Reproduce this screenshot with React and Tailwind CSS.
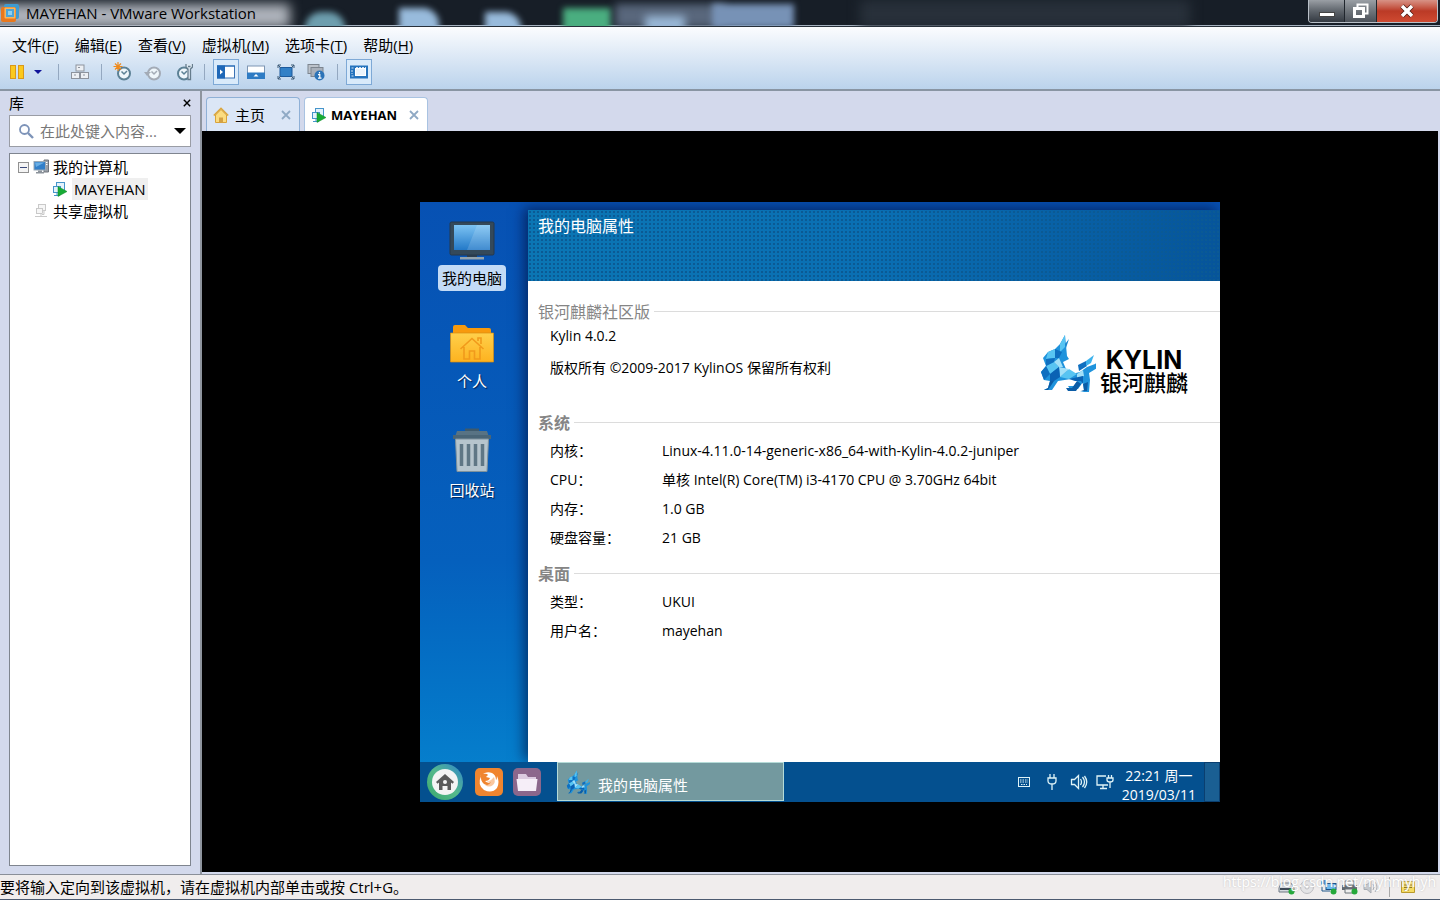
import { Fragment } from 'react'

const WIN_FONT = "font-['Open_Sans','Noto_Sans_CJK_SC',sans-serif]"
const GUEST_FONT = "font-['Open_Sans','Noto_Sans_CJK_SC',sans-serif]"

const MENUS = [
  ['文件', 'F'],
  ['编辑', 'E'],
  ['查看', 'V'],
  ['虚拟机', 'M'],
  ['选项卡', 'T'],
  ['帮助', 'H'],
]

const SECTIONS = [
  {
    title: '系统',
    rows: [
      ['内核：', 'Linux-4.11.0-14-generic-x86_64-with-Kylin-4.0.2-juniper'],
      ['CPU：', '单核 Intel(R) Core(TM) i3-4170 CPU @ 3.70GHz 64bit'],
      ['内存：', '1.0 GB'],
      ['硬盘容量：', '21 GB'],
    ],
  },
  {
    title: '桌面',
    rows: [
      ['类型：', 'UKUI'],
      ['用户名：', 'mayehan'],
    ],
  },
]

/* ---------- icons ---------- */

function VmwareLogo() {
  return (
    <svg className="h-5 w-5 shrink-0" viewBox="0 0 20 20">
      <rect x="4" y="1" width="15" height="15" rx="2" fill="#3f9bd0" />
      <rect x="1" y="4" width="15" height="15" rx="2" fill="#e8781e" />
      <rect x="4.500" y="4.500" width="11" height="11" rx="1" fill="#f7b55c" />
      <rect x="6" y="6" width="8" height="8" fill="#4ba4d8" />
      <rect x="8" y="8" width="4" height="4" fill="#8fd0ef" />
    </svg>
  )
}

function PauseIcon() {
  return (
    <svg className="h-4 w-4" viewBox="0 0 16 16" fill="#fbc91d" stroke="#d9981a">
      <rect x="1.500" y="1.500" width="5" height="13" />
      <rect x="9.500" y="1.500" width="5" height="13" />
    </svg>
  )
}

function BoxesIcon() {
  return (
    <svg className="h-5 w-5" viewBox="0 0 20 20" fill="#eceff3" stroke="#8d939d">
      <rect x="6" y="3" width="8" height="6" />
      <rect x="1.500" y="10.500" width="8" height="6" />
      <rect x="10.500" y="10.500" width="8" height="6" />
      <path d="M8 5.500h2M4 13h2M13 13h2" />
    </svg>
  )
}

function ClockIcon({ kind }) {
  const stroke = kind === 'revert' ? '#a3abb6' : '#5c8195'
  return (
    <svg className="h-5 w-5" viewBox="0 0 20 20" fill="none" stroke={stroke}>
      <circle cx="11" cy="11.500" r="6" fill="#eef6fb" strokeWidth="2" />
      <path d="M8.500 9.500l2.500 2.500 3-3" strokeWidth="1.500" />
      {kind === 'take' && (
        <path d="M5 0v9M.5 4.500h9M2 1.500l6 6M8 1.500l-6 6" stroke="#ef8a1d" strokeWidth="1.200" />
      )}
      {kind === 'revert' && <path d="M1 10l3 4 4-4z" fill={stroke} stroke="none" />}
      {kind === 'manage' && (
        <path
          d="M13 2v3l2 2v10.500h2.500V7l2-2V2M15 4.500h2.500"
          fill="#dce8f2"
          stroke="#667c8c"
          strokeWidth="1.300"
        />
      )}
    </svg>
  )
}

function SidebarViewIcon() {
  return (
    <svg className="h-4 w-5" viewBox="0 0 20 16">
      <rect x="1.500" y="2" width="17" height="12" fill="#fff" stroke="#3b72b4" />
      <path d="M1 1.500h8v13H1z" fill="#1f68b8" />
      <path d="M4 5.500v5l3-2.500z" fill="#fff" />
      <path d="M1 2h18" stroke="#1f68b8" />
    </svg>
  )
}

function ThumbnailViewIcon() {
  return (
    <svg className="h-4 w-5" viewBox="0 0 20 16">
      <rect x="1.500" y="2" width="17" height="12" fill="#fff" stroke="#7e96b3" />
      <path d="M1 8.500h18V15H1z" fill="#2f7cc4" />
      <path d="M7.500 12.500h5L10 10z" fill="#fff" />
    </svg>
  )
}

function FullscreenIcon() {
  return (
    <svg className="h-4 w-5" viewBox="0 0 20 16" fill="none">
      <rect x="4" y="3.500" width="12" height="9" fill="#3280c6" stroke="#1c5a9d" />
      <path
        d="M2 4V1h3M15 1h3v3M18 12v3h-3M5 15H2v-3M2 1l3 3M18 1l-3 3M18 15l-3-3M2 15l3-3"
        stroke="#3d5a76"
      />
    </svg>
  )
}

function UnityIcon() {
  return (
    <svg className="h-5 w-5" viewBox="0 0 20 20">
      <rect x="2" y="2.500" width="11" height="9" fill="#bcc2ca" stroke="#7d858f" />
      <rect x="5" y="5.500" width="12" height="9" fill="#a9b0ba" stroke="#7d858f" />
      <circle cx="13.500" cy="13.500" r="5" fill="#2c74b8" />
      <path d="M13.500 10v1.500M12 12.700h1.800v3M12 16.200h3.500" stroke="#fff" strokeWidth="1.200" fill="none" />
    </svg>
  )
}

function ConsoleIcon() {
  return (
    <svg className="h-4 w-5" viewBox="0 0 20 16">
      <rect x="1" y="1.500" width="18" height="13" fill="#2573bd" />
      <path d="M2.500 4h3M2.500 12h3M3 6v4M7 3.500h10" stroke="#cfe3f5" strokeDasharray="2 1" />
      <rect x="6.500" y="4.500" width="10" height="7" fill="#eaf3fb" stroke="#fff" />
    </svg>
  )
}

function SearchIcon() {
  return (
    <svg className="h-4 w-4 shrink-0" viewBox="0 0 16 16" fill="none" stroke="#7d93b8">
      <circle cx="6.500" cy="6.500" r="4.500" strokeWidth="1.800" />
      <path d="M10 10l5 5" strokeWidth="2.400" />
    </svg>
  )
}

function HomeIcon() {
  return (
    <svg className="h-4 w-4 shrink-0" viewBox="0 0 16 16">
      <path d="M2.500 8v7.500h11V8L8 2.500z" fill="#fbdc80" stroke="#d8a33b" />
      <path d="M.8 8.500L8 1.300l7.200 7.200" fill="none" stroke="#dba53d" strokeWidth="1.600" />
      <path d="M6 15.500v-5h4v5z" fill="#d4a144" />
    </svg>
  )
}

function VmIcon() {
  return (
    <svg className="h-4 w-4 shrink-0" viewBox="0 0 16 16">
      <g fill="#e4f2fb" stroke="#4695cb">
        <rect x="4.500" y="1.500" width="8" height="8" />
        <rect x="1.500" y="5.500" width="7" height="6" />
        <path d="M2 14.500h6M5 11.500v3" />
      </g>
      <path d="M6 5.500v10l9-5z" fill="#17ab35" stroke="#0e8c28" strokeWidth=".5" />
    </svg>
  )
}

function ComputerIcon() {
  return (
    <svg className="h-4 w-4 shrink-0" viewBox="0 0 16 16">
      <path d="M11 1h4.500v12H11z" fill="#9ba0a7" stroke="#6f757d" />
      <path d="M12.500 3.500h2M12.500 5.500h2" stroke="#fff" />
      <rect x="1" y="2.500" width="11.500" height="8.500" fill="#317fc9" stroke="#9ba9b6" />
      <path d="M2 3.500h9.500L3 8z" fill="#69aee5" />
      <path d="M5 11.500h4V13h2v1.500H3V13h2z" fill="#8c939b" />
    </svg>
  )
}

function SharedIcon() {
  return (
    <svg className="h-4 w-4 shrink-0" viewBox="0 0 16 16" fill="#f6f6f6" stroke="#c9c9c9">
      <rect x="5.500" y="1.500" width="7" height="6" />
      <rect x="3.500" y="5.500" width="6" height="5" />
      <path d="M2 13.500h12M8 10.500v3M11 7.500v4H9" />
    </svg>
  )
}

function CloseGlyph({ className }) {
  return (
    <svg className={className} viewBox="0 0 10 10" fill="none" stroke="currentColor" strokeWidth="1.800">
      <path d="M1 1l8 8M9 1L1 9" />
    </svg>
  )
}

function MonitorIcon() {
  return (
    <svg className="h-[42px] w-12" viewBox="0 0 48 42">
      <defs>
        <linearGradient id="screen" x1="0" y1="0" x2="0" y2="1">
          <stop offset="0" stopColor="#7cc3f3" />
          <stop offset="1" stopColor="#2379c8" />
        </linearGradient>
      </defs>
      <path d="M19 34h10v4H19z" fill="#2c3e50" />
      <rect x="2" y="2" width="44" height="33" rx="1.500" fill="#34495a" stroke="#26384a" />
      <rect x="6" y="5" width="36" height="25" fill="url(#screen)" />
      <path d="M29 5h13v25H19z" fill="#fff" opacity=".14" />
      <path d="M12 37h24v2.500H12z" fill="#93a3ae" />
    </svg>
  )
}

function FolderIcon() {
  return (
    <svg className="h-[42px] w-12" viewBox="0 0 48 42">
      <defs>
        <linearGradient id="folder" x1="0" y1="0" x2="0" y2="1">
          <stop offset="0" stopColor="#ffd04b" />
          <stop offset="1" stopColor="#fdb21f" />
        </linearGradient>
      </defs>
      <path d="M5 14V4q0-2 2-2h10l3 3h21q2 0 2 2v7z" fill="#f89a0d" />
      <path d="M2.500 10h43v29h-43z" fill="url(#folder)" stroke="#d98e12" strokeWidth=".7" />
      <path
        d="M12.500 26L24 15.500 35.500 26M16 24v12h5.500v-8h5v8H32V24M30 18v-3h3v6"
        fill="none"
        stroke="#f19a1b"
        strokeWidth="1.600"
      />
    </svg>
  )
}

function TrashIcon() {
  return (
    <svg className="h-12 w-12" viewBox="0 0 48 48">
      <path d="M17 6V2.500h14V6" fill="#3f5a6b" />
      <path d="M7 11l2-6h30l2 6v3H7z" fill="#587384" />
      <path d="M5 9h38v4H5z" fill="#4a6576" />
      <path d="M7.500 13h33L39 45.500H9z" fill="#b6c5cd" stroke="#7f929d" />
      <path d="M13.500 18v22M20.500 18v22M27.500 18v22M34.500 18v22" stroke="#5f7785" strokeWidth="3.500" />
    </svg>
  )
}

function KylinBeast({ className }) {
  return (
    <svg className={className} viewBox="0 0 56 58">
      <path d="M25 1l-5 9-5 5-7 3-5 6 3 8-5 6 3 8 6 1-2 7-4 2h8l6-9 13-2 8 0-5 7h-6l2 3h8l5-7 1 9-4 1h9l1-12-1-7 8-5 3-8-5 4-8 3-7 5-8 2-6-5-3-7 6-3-2-3z" fill="#1f93dc" />
      <path d="M25 1l-5 9 0 8 5-5zM8 18l7-3 0 9-9 1zM6 32l8-4 5 5-9 7zM29 35l8 5-8 5-9-2z" fill="#58c4f2" />
      <path d="M15 15l7 3-3 6-4 0zM6 25l9-1-1 4-8 4zM1 38l5-6 4 8-6 6zM38 31l8-4 1 5-8 5z" fill="#0f6fc0" />
      <path d="M14 28l5-4 4 9-4 0zM20 43l9-8-10-2zM37 40l6-4 1 6-7 2z" fill="#a2e0f8" />
      <path d="M10 40l9-7 1 10-6 4-4 0zM29 45l14-3 0 8-2-3-6 0z" fill="#0a62b4" />
      <path d="M46 27l8-6-3 8-5 3z" fill="#3db2ec" />
      <path d="M10 47l4 0-6 9H4l4-2zM37 47l-5 7h-6l2 3h8l5-7zM43 50l1 6-3 1h6l1-9z" fill="#0b5ca6" />
      <path d="M25 10l4-5-3 9z" fill="#1b86cf" />
    </svg>
  )
}

function StartIcon() {
  return (
    <svg className="h-9 w-9" viewBox="0 0 36 36">
      <defs>
        <linearGradient id="ring" x1="0" y1="1" x2="1" y2="0">
          <stop offset="0" stopColor="#3aa76b" />
          <stop offset=".5" stopColor="#55b98c" />
          <stop offset="1" stopColor="#2f86cc" />
        </linearGradient>
      </defs>
      <circle cx="18" cy="18" r="18" fill="url(#ring)" />
      <circle cx="18" cy="18" r="13" fill="#f4f4f4" />
      <path d="M9 18L18 10l9 8-1.500 1.800L24 18.500V26h-3.500v-4h-5v4H12v-7.500l-1.500 1.300z" fill="#5a5a5a" />
      <circle cx="18" cy="18" r="2" fill="#f4f4f4" />
    </svg>
  )
}

function FirefoxIcon() {
  return (
    <svg className="h-7 w-7" viewBox="0 0 28 28">
      <rect width="28" height="28" rx="5" fill="#f0852f" />
      <path
        d="M6 8q-4 9 3 14 8 4 13-2 3-6 0-12 0 3-1 4 0-5-4-7-5-2-9 1 4-1 5 1l-2 2 4 1q-1 3-5 3 3 3 6 1-2 5-7 2-4-3-3-10z"
        fill="#fff"
      />
      <path d="M11 12q2 2 5 0l3-3q2 5-1 8-4 3-8 0 4 0 5-3-3 0-4-2z" fill="#f6a15d" opacity=".6" />
    </svg>
  )
}

function FilesIcon() {
  return (
    <svg className="h-7 w-7" viewBox="0 0 28 28">
      <rect width="28" height="28" rx="5" fill="#8c678c" />
      <path d="M5 6h8l2 3h8v4H5z" fill="#dccbe0" />
      <path d="M3.500 11h21L23 23H5z" fill="#f6eef8" />
    </svg>
  )
}

/* ---------- host window ---------- */

function TitleBar() {
  return (
    <header className="relative flex h-[27px] items-center justify-between overflow-hidden border-b border-[#27303a] bg-[#171e27] shadow-[inset_0_-1px_0_#a6b2c0]">
      <div aria-hidden="true" className="absolute inset-0">
        <div className="absolute -left-10 top-1 h-6 w-[330px] bg-[#aeb3bb] blur-[6px]" />
        <div className="absolute left-[305px] top-3 h-8 w-10 rounded-full bg-[#6d9eae] blur-[3px]" />
        <div className="absolute left-[399px] top-2 h-6 w-10 rounded-tr-2xl bg-[#98bbdc] blur-[3px]" />
        <div className="absolute left-[485px] top-3 h-6 w-9 rounded-tr-2xl bg-[#98bbdc] blur-[3px]" />
        <div className="absolute left-[563px] top-2 h-6 w-12 bg-[#4aae80] blur-[3px]" />
        <div className="absolute left-[615px] top-1 h-6 w-[110px] bg-[#59677c] blur-[4px]" />
        <div className="absolute left-[645px] top-4 h-4 w-10 bg-[#9ab9d8] blur-[4px]" />
        <div className="absolute left-[712px] top-1 h-6 w-[82px] bg-[#7792b6] blur-[3px]" />
        <div className="absolute left-[860px] top-0 h-7 w-[330px] bg-[#28303a] blur-[6px]" />
      </div>
      <div className="relative flex items-center gap-1.5">
        <VmwareLogo />
        <h1 className="text-[15px] leading-5 text-black">MAYEHAN - VMware Workstation</h1>
      </div>
      <div className="relative mr-0.5 flex h-[23px] self-start overflow-hidden rounded-b border border-t-0 border-[#b9c0c8] text-white">
        <button
          aria-label="最小化"
          className="flex w-9 items-end justify-center border-r border-[#20262d] bg-linear-to-b from-[#9a9fa5] via-[#5f656c] via-50% to-[#343a42] pb-[5px]"
        >
          <span className="h-[5px] w-4 border border-[#444] bg-white" />
        </button>
        <button
          aria-label="还原"
          className="flex w-8 items-center justify-center border-r border-[#20262d] bg-linear-to-b from-[#9a9fa5] via-[#6f757b] via-50% to-[#4b5159]"
        >
          <svg className="h-4 w-[18px]" viewBox="0 0 18 16" fill="none">
            <path d="M5.500 4V1.500h10v9H13" stroke="#fff" strokeWidth="2" />
            <rect x="2.500" y="5.500" width="9" height="8" stroke="#fff" strokeWidth="3" />
          </svg>
        </button>
        <button
          aria-label="关闭"
          className="flex w-[60px] items-center justify-center bg-linear-to-b from-[#d79286] via-[#bb3a26] via-50% to-[#cf4a31]"
        >
          <svg className="h-3.5 w-4" viewBox="0 0 16 14">
            <path d="M3 2l10 10M13 2L3 12" stroke="#4e1912" strokeWidth="5" />
            <path d="M3 2l10 10M13 2L3 12" stroke="#fff" strokeWidth="3.500" />
          </svg>
        </button>
      </div>
    </header>
  )
}

function ToolButton({ label, active, children }) {
  return (
    <button
      aria-label={label}
      className={`flex h-[26px] w-[26px] items-center justify-center border ${
        active ? 'border-[#7ea9d6] bg-[#d9eafa]' : 'border-transparent'
      }`}
    >
      {children}
    </button>
  )
}

function Divider() {
  return <span className="h-4 w-px bg-[#94a8c0]" />
}

function MenuAndTools() {
  return (
    <div className="border-b-2 border-[#8995a3] bg-linear-to-b from-[#fbfcfe] to-[#bbd3ec]">
      <nav className="flex h-8 items-center gap-4 px-3 pt-1">
        {MENUS.map(([name, key]) => (
          <button key={key} className="text-[15px] leading-5 text-black">
            {name}(<u className="underline-offset-2">{key}</u>)
          </button>
        ))}
      </nav>
      <div className="flex h-[30px] items-center pb-1 pl-1">
        <ToolButton label="挂起">
          <PauseIcon />
        </ToolButton>
        <button aria-label="电源选项" className="mr-3 flex w-4 justify-center">
          <svg className="h-1 w-2" viewBox="0 0 8 4">
            <path d="M0 0h8L4 4z" fill="#10149a" />
          </svg>
        </button>
        <div className="flex items-center gap-2">
          <Divider />
          <ToolButton label="发送 Ctrl+Alt+Del">
            <BoxesIcon />
          </ToolButton>
          <Divider />
        </div>
        <div className="ml-2 mr-2 flex items-center gap-1">
          <ToolButton label="拍摄快照">
            <ClockIcon kind="take" />
          </ToolButton>
          <ToolButton label="恢复快照">
            <ClockIcon kind="revert" />
          </ToolButton>
          <ToolButton label="管理快照">
            <ClockIcon kind="manage" />
          </ToolButton>
        </div>
        <Divider />
        <div className="ml-2 mr-2 flex items-center gap-1">
          <ToolButton label="显示或隐藏库" active>
            <SidebarViewIcon />
          </ToolButton>
          <ToolButton label="缩略图栏">
            <ThumbnailViewIcon />
          </ToolButton>
          <ToolButton label="全屏">
            <FullscreenIcon />
          </ToolButton>
          <ToolButton label="Unity">
            <UnityIcon />
          </ToolButton>
        </div>
        <Divider />
        <div className="ml-2">
          <ToolButton label="控制台视图" active>
            <ConsoleIcon />
          </ToolButton>
        </div>
      </div>
    </div>
  )
}

function Library() {
  return (
    <aside className="flex w-[202px] shrink-0 flex-col border-r-2 border-[#8e949e] px-[9px] pb-2">
      <div className="flex h-6 items-center justify-between text-black">
        <h2 className="text-[15px] leading-5">库</h2>
        <button aria-label="关闭库">
          <CloseGlyph className="h-2 w-2" />
        </button>
      </div>
      <div className="flex h-8 items-center gap-1.5 border border-[#9a9da5] bg-white px-2">
        <SearchIcon />
        <input
          aria-label="搜索"
          placeholder="在此处键入内容..."
          className="min-w-0 flex-1 text-[15px] leading-5 outline-none placeholder:text-[#787878]"
        />
        <button aria-label="搜索选项" className="-mr-1">
          <svg className="h-1.5 w-3" viewBox="0 0 12 6">
            <path d="M0 0h12L6 6z" />
          </svg>
        </button>
      </div>
      <ul className="mt-1.5 flex-1 border border-[#7f858f] bg-white px-2 pt-0.5 text-[15px] leading-[22px] text-black">
        <li>
          <div className="flex items-center gap-1">
            <button
              aria-label="折叠"
              className="flex h-[11px] w-[11px] items-center justify-center border border-[#919191] bg-[#f4f4f4]"
            >
              <span className="h-px w-[7px] bg-[#3b4a7c]" />
            </button>
            <ComputerIcon />
            <span>我的计算机</span>
          </div>
          <ul>
            <li className="flex items-center gap-1 pl-[34px]">
              <VmIcon />
              <span className="bg-[#efefef] px-0.5">MAYEHAN</span>
            </li>
          </ul>
        </li>
        <li className="flex items-center gap-1 pl-[15px]">
          <SharedIcon />
          <span>共享虚拟机</span>
        </li>
      </ul>
    </aside>
  )
}

function Tabs() {
  return (
    <div role="tablist" className="flex items-end gap-1 bg-[#d3d9ec] px-1 pt-1.5">
      <div className="flex h-[34px] items-center rounded-t border border-b-0 border-[#8fb0d6] bg-[#dbe6f6] px-1.5">
        <button role="tab" aria-selected="false" className="flex items-center gap-1.5 text-[15px] leading-5">
          <HomeIcon />
          主页
        </button>
        <button aria-label="关闭主页" className="ml-4 mr-0.5 text-[#8fa9c4]">
          <CloseGlyph className="h-2.5 w-2.5" />
        </button>
      </div>
      <div className="flex h-[34px] items-center rounded-t border border-b-0 border-[#a9c3e2] bg-white px-1.5">
        <button
          role="tab"
          aria-selected="true"
          className="flex items-center gap-1 text-[13px] font-bold leading-5"
        >
          <VmIcon />
          MAYEHAN
        </button>
        <button aria-label="关闭 MAYEHAN" className="ml-3 mr-0.5 text-[#8fa9c4]">
          <CloseGlyph className="h-2.5 w-2.5" />
        </button>
      </div>
    </div>
  )
}

function StatusBar() {
  return (
    <footer className="relative flex h-[26px] items-center justify-between border-y border-t-[#8a8f98] border-b-[#4c5a70] bg-[#f0eded] text-black">
      <p className="text-[15px] leading-5">要将输入定向到该虚拟机，请在虚拟机内部单击或按 Ctrl+G。</p>
      <div className="flex items-center gap-1 pr-6">
        <svg className="h-4 w-[17px]" viewBox="0 0 17 16">
          <path d="M3 4h10l3 5v4H1V9z" fill="#d5dae0" stroke="#6e7883" />
          <path d="M2 10h13" stroke="#3d4a57" strokeWidth="2" />
          <circle cx="13.500" cy="12.500" r="3" fill="#25a83a" />
        </svg>
        <svg className="h-4 w-[17px]" viewBox="0 0 17 16">
          <circle cx="8" cy="8" r="6.500" fill="#e4e4e6" stroke="#bdbdc2" />
          <circle cx="8" cy="8" r="2" fill="#fff" stroke="#bdbdc2" />
        </svg>
        <svg className="h-4 w-[17px]" viewBox="0 0 17 16">
          <path d="M2 2v10h8M5 2v4" stroke="#20598c" fill="none" />
          <path d="M1 1h6v4H1z" fill="#3c83c4" />
          <rect x="6" y="4.500" width="10" height="6" fill="#6bb8ee" stroke="#17508a" />
          <circle cx="13.500" cy="12.500" r="3" fill="#25a83a" />
        </svg>
        <svg className="h-4 w-[17px]" viewBox="0 0 17 16">
          <path d="M4 2h9v4H4z" fill="#fff" stroke="#6b7278" />
          <path d="M1 6h15v5H1z" fill="#5f676f" />
          <path d="M4 10h9v4H4z" fill="#eee" stroke="#6b7278" />
          <circle cx="13.500" cy="12.500" r="3" fill="#25a83a" />
        </svg>
        <svg className="h-4 w-[17px]" viewBox="0 0 17 16" fill="none" stroke="#a8acb2">
          <path d="M2 5.500h3L9 2v12l-4-3.500H2z" fill="#c4c8cd" />
          <path d="M11 5q2 3 0 6M13 3q4 5 0 10" />
        </svg>
        <span className="mx-1.5 h-5 w-px bg-[#a9a9a9]" />
        <svg className="h-4 w-4" viewBox="0 0 16 16">
          <path d="M1.500 2.500h13v11h-13z" fill="#f6dc63" stroke="#b99a2c" />
          <path d="M4 6h8M4 8.500h8M4 11h5" stroke="#8b7420" />
        </svg>
      </div>
      <span className="absolute right-1 top-[-3px] text-[14px] leading-5 text-white [text-shadow:0_0_2px_#bbb]">
        https://blog.csdn.net/myhmyhyh
      </span>
    </footer>
  )
}

/* ---------- guest desktop ---------- */

function GroupTitle({ bold, children }) {
  return (
    <div className="flex h-5 items-center gap-1 pl-2.5">
      <h3 className={`text-[16px] leading-5 text-[#858585] ${bold ? 'font-bold' : ''}`}>{children}</h3>
      <span className="h-px flex-1 bg-[#dcdcdc]" />
    </div>
  )
}

function DesktopIcon({ label, selected, children }) {
  return (
    <button className="flex flex-col items-center gap-[3px] text-[15px] leading-[22px]">
      {children}
      <span
        className={
          selected
            ? 'rounded bg-[#c3dbf6] px-1 py-0.5 text-black'
            : 'px-1 py-0.5 text-white [text-shadow:1px_1px_1px_#002050]'
        }
      >
        {label}
      </span>
    </button>
  )
}

function PropertiesWindow() {
  return (
    <section className="mt-2 flex min-w-0 flex-1 flex-col bg-white text-black shadow-[-4px_-2px_12px_rgba(0,10,50,0.6)]">
      <div className="h-[71px] bg-[#0a6db0] bg-[radial-gradient(#0b5a94_1px,transparent_1px),linear-gradient(100deg,#0b76b4,#0a6fb3_50%,#06549a)] bg-size-[4px_4px,100%_100%] px-2.5 pt-1.5">
        <h2 className="text-[16px] leading-5 text-white">我的电脑属性</h2>
      </div>
      <div className="pt-[21px]">
        <GroupTitle>银河麒麟社区版</GroupTitle>
        <div className="flex justify-between pl-[22px] pr-8">
          <div className="pt-1 text-[14px] leading-5">
            <p>Kylin 4.0.2</p>
            <p className="mt-3">版权所有 ©2009-2017 KylinOS 保留所有权利</p>
          </div>
          <div className="flex items-end gap-1 pt-3">
            <KylinBeast className="h-[58px] w-14" />
            <div className="flex flex-col items-center">
              <span className="font-['Inter',sans-serif] text-[25px] font-bold leading-6">KYLIN</span>
              <span className="text-[22px] font-medium leading-5">银河麒麟</span>
            </div>
          </div>
        </div>
      </div>
      {SECTIONS.map((section, i) => (
        <div key={section.title} className={i === 0 ? 'pt-[21px]' : 'pt-4'}>
          <GroupTitle bold>{section.title}</GroupTitle>
          <dl className="grid grid-cols-[112px_1fr] gap-y-[9px] pl-[22px] pt-2 text-[14px] leading-5">
            {section.rows.map(([name, value]) => (
              <Fragment key={name}>
                <dt>{name}</dt>
                <dd>{value}</dd>
              </Fragment>
            ))}
          </dl>
        </div>
      ))}
    </section>
  )
}

function Taskbar() {
  return (
    <div className="relative flex h-10 items-center bg-[#04508f] text-white">
      <div className="flex flex-1 items-center pl-[7px]">
        <button aria-label="开始">
          <StartIcon />
        </button>
        <button aria-label="Firefox" className="ml-3">
          <FirefoxIcon />
        </button>
        <button aria-label="文件" className="ml-2.5">
          <FilesIcon />
        </button>
        <button className="ml-4 flex h-[39px] w-[227px] items-center gap-2 border border-[#b5dbd8] bg-[#73999f] px-2 text-[15px] leading-5">
          <KylinBeast className="h-6 w-6" />
          <span className="pt-1.5">我的电脑属性</span>
        </button>
      </div>
      <div className="flex items-center gap-3">
        <svg className="h-3 w-3" viewBox="0 0 12 12" fill="none" stroke="#dff3f7">
          <rect x=".5" y="1.500" width="11" height="9" />
          <path d="M2 4h8M2 6h8M3 8.500h6" strokeDasharray="1.500 1" />
        </svg>
        <svg className="ml-1 h-[18px] w-3" viewBox="0 0 12 18" fill="none" stroke="#dff3f7" strokeWidth="1.300">
          <path d="M4 1v4M8 1v4M2 5h8v3q0 3-4 3t-4-3zM6 11v6" />
        </svg>
        <svg className="h-[18px] w-[18px]" viewBox="0 0 18 18" fill="none" stroke="#dff3f7" strokeWidth="1.300">
          <path d="M1.500 6.500h3l4-4v13l-4-4h-3zM10.500 6q2 3 0 6M12.500 4q4 5 0 10M14.500 3q4.500 6 0 12" />
        </svg>
        <svg className="-ml-1 h-[18px] w-[18px]" viewBox="0 0 18 18" fill="none" stroke="#dff3f7" strokeWidth="1.300">
          <path d="M10 3H1v9h11M7 12v3M4 15.500h7M12.500 2v3M15.500 2v3M11 5h6v2q0 2-3 2t-3-2zM14 9v6" />
        </svg>
      </div>
      <time className="ml-2 mr-2 self-start pt-1 text-center text-[14px] leading-[19px]">
        22:21 周一
        <br />
        2019/03/11
      </time>
      <button aria-label="显示桌面" className="h-full w-4 border border-[#0a3f70] bg-[#1a5f93]" />
    </div>
  )
}

function GuestDesktop() {
  return (
    <div
      className={`${GUEST_FONT} flex aspect-4/3 w-full max-w-[800px] flex-col overflow-hidden bg-linear-to-b from-[#0751b3] via-[#0560bd] via-60% to-[#0784cf]`}
    >
      <div className="flex min-h-0 flex-1">
        <div className="flex w-[108px] shrink-0 flex-col items-center gap-8 pr-1 pt-[18px]">
          <DesktopIcon label="我的电脑" selected>
            <MonitorIcon />
          </DesktopIcon>
          <DesktopIcon label="个人">
            <FolderIcon />
          </DesktopIcon>
          <DesktopIcon label="回收站">
            <TrashIcon />
          </DesktopIcon>
        </div>
        <PropertiesWindow />
      </div>
      <Taskbar />
    </div>
  )
}

export default function App() {
  return (
    <div className={`${WIN_FONT} flex min-h-screen flex-col bg-[#d3d9ec]`}>
      <TitleBar />
      <MenuAndTools />
      <div className="flex flex-1">
        <Library />
        <main className="flex min-w-0 flex-1 flex-col pb-0.5 pr-0.5">
          <Tabs />
          <div className="flex flex-1 items-center justify-center bg-black">
            <GuestDesktop />
          </div>
        </main>
      </div>
      <StatusBar />
    </div>
  )
}
